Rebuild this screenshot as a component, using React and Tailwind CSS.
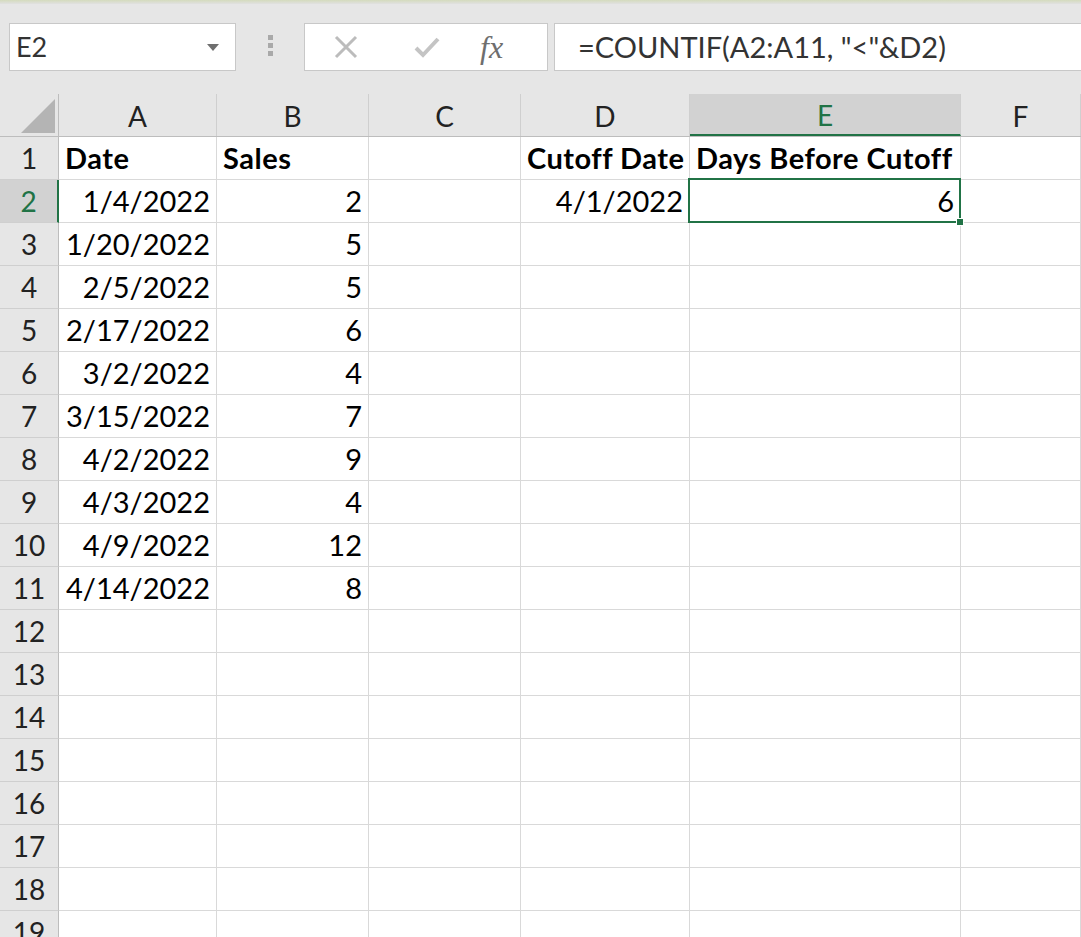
import React from 'react';

const font = { fontFamily: 'Lato, "Open Sans", sans-serif' };

const colWidths = ['w-[158px]', 'w-[152px]', 'w-[152px]', 'w-[169px]', 'w-[271px]', 'flex-1'];
const colLetters = ['A', 'B', 'C', 'D', 'E', 'F'];

const data = [
  [{ t: 'Date', b: true }, { t: 'Sales', b: true }, null, { t: 'Cutoff Date', b: true }, { t: 'Days Before Cutoff', b: true }],
  [{ t: '1/4/2022', r: true }, { t: '2', r: true }, null, { t: '4/1/2022', r: true }, { t: '6', r: true }],
  [{ t: '1/20/2022', r: true }, { t: '5', r: true }],
  [{ t: '2/5/2022', r: true }, { t: '5', r: true }],
  [{ t: '2/17/2022', r: true }, { t: '6', r: true }],
  [{ t: '3/2/2022', r: true }, { t: '4', r: true }],
  [{ t: '3/15/2022', r: true }, { t: '7', r: true }],
  [{ t: '4/2/2022', r: true }, { t: '9', r: true }],
  [{ t: '4/3/2022', r: true }, { t: '4', r: true }],
  [{ t: '4/9/2022', r: true }, { t: '12', r: true }],
  [{ t: '4/14/2022', r: true }, { t: '8', r: true }],
];

function Toolbar() {
  return (
    <div className="h-[94px] shrink-0 bg-[#e6e6e6] flex flex-col">
      <div className="h-[4px] bg-gradient-to-b from-[#d4dbbd] to-[#e1e1e1]"></div>
      <div className="flex items-start pt-[19px] pl-[9px]">
        <div className="w-[227px] h-[48px] bg-white border border-[#c8c8c8] flex items-center justify-between pl-[6px] pr-[16px]">
          <span className="text-[27px] text-[#333]">E2</span>
          <svg width="12" height="7" viewBox="0 0 12 7"><path d="M0 0h12L6 7z" fill="#6f6f6f" /></svg>
        </div>
        <div className="ml-[32px] mt-[12px] flex flex-col gap-[3px]">
          <div className="w-[5px] h-[5px] bg-[#a9a9a9]"></div>
          <div className="w-[5px] h-[5px] bg-[#a9a9a9]"></div>
          <div className="w-[5px] h-[5px] bg-[#a9a9a9]"></div>
        </div>
        <div className="ml-[31px] w-[244px] h-[48px] bg-white border border-[#c8c8c8] flex items-center">
          <svg className="ml-[29px]" width="24" height="24" viewBox="0 0 24 24">
            <path d="M2 2L22 22M22 2L2 22" stroke="#bcbcbc" strokeWidth="3" fill="none" />
          </svg>
          <svg className="ml-[56px]" width="26" height="22" viewBox="0 0 26 22">
            <path d="M2 12L9 19L24 3" stroke="#c4c4c4" strokeWidth="4" fill="none" />
          </svg>
          <span className="ml-[40px] text-[32px] leading-none italic text-[#6e6e6e]" style={{ fontFamily: '"Liberation Serif", serif' }}>fx</span>
        </div>
        <div className="ml-[6px] flex-1 h-[48px] bg-white border border-r-0 border-[#c8c8c8] flex items-center pl-[23px]">
          <span className="text-[29px] text-[#333]">=COUNTIF(A2:A11, "&lt;"&amp;D2)</span>
        </div>
      </div>
    </div>
  );
}

function HeaderRow() {
  return (
    <div className="flex h-[43px] shrink-0 bg-[#e6e6e6] border-b border-[#bdbdbd]">
      <div className="w-[59px] shrink-0 border-r border-[#bdbdbd] flex items-end justify-end pr-[3px] pb-[3px]">
        <svg width="34" height="34" viewBox="0 0 34 34"><path d="M34 0V34H0z" fill="#b4b4b4" /></svg>
      </div>
      {colLetters.map((l, i) => {
        const sel = l === 'E';
        return (
          <div
            key={l}
            className={
              colWidths[i] +
              ' shrink-0 flex items-center justify-center text-[28px] pt-[2px] border-r border-[#cfcfcf] ' +
              (sel ? 'bg-[#d2d2d2] text-[#217346] border-b-2 border-b-[#217346]' : 'text-[#222]')
            }
          >
            {l}
          </div>
        );
      })}
    </div>
  );
}

function Row({ n, cells }) {
  const selRow = n === 2;
  return (
    <div className="flex h-[43px] shrink-0">
      <div
        className={
          'w-[59px] shrink-0 flex items-center justify-center text-[28px] border-b border-[#cfcfcf] ' +
          (selRow ? 'bg-[#d2d2d2] text-[#217346] border-r-2 border-r-[#217346]' : 'bg-[#e6e6e6] text-[#222] border-r border-r-[#bdbdbd]')
        }
      >
        {n}
      </div>
      {colWidths.map((w, i) => {
        const c = cells && cells[i];
        const sel = selRow && i === 4;
        return (
          <div
            key={i}
            className={
              w +
              ' shrink-0 relative bg-white border-r border-b border-[#d9d9d9] flex items-end pb-[3px] text-[29px] leading-none text-black whitespace-nowrap overflow-visible ' +
              (c && c.r ? 'justify-end pr-[6px]' : 'justify-start pl-[6px]') +
              (c && c.b ? ' font-bold tracking-[0.5px]' : '')
            }
          >
            {c ? <span className="relative z-10 pb-[4px]">{c.t}</span> : null}
            {sel ? (
              <div className="absolute -left-[2px] -top-[2px] w-[273px] h-[45px] border-[2.5px] border-[#217346] z-20">
                <div className="absolute -right-[5px] -bottom-[5px] w-[8px] h-[8px] bg-[#217346] border border-white"></div>
              </div>
            ) : null}
          </div>
        );
      })}
    </div>
  );
}

export default function App() {
  const rows = Array.from({ length: 19 }, (_, i) => i + 1);
  return (
    <div className="w-[1081px] h-[937px] overflow-hidden bg-white flex flex-col" style={font}>
      <Toolbar />
      <HeaderRow />
      {rows.map((n) => (
        <Row key={n} n={n} cells={data[n - 1]} />
      ))}
    </div>
  );
}
